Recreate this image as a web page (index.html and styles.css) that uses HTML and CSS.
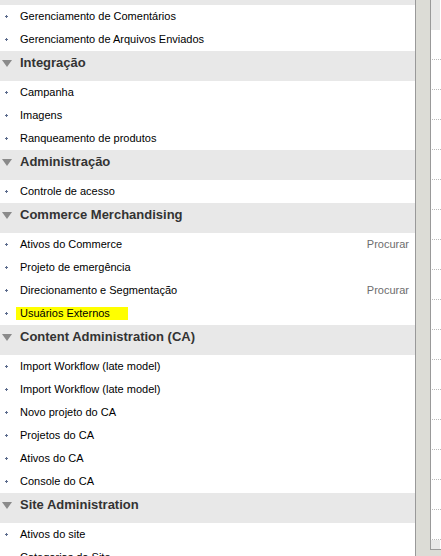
FILE: index.html
```html
<!DOCTYPE html>
<html lang="pt">
<head>
  <meta charset="UTF-8" />
  <title>Menu</title>
  <link rel="stylesheet" href="styles.css">
</head>
<body>
  <div class="menu">
    <div class="group-end"></div>
    <ul class="items">
      <li><span class="bullet"><svg width="3" height="3" viewBox="0 0 3 3"><path d="M1 0h1v3H1zM0 1h3v1H0z" /></svg></span>Gerenciamento de Comentários</li>
      <li><span class="bullet"><svg width="3" height="3" viewBox="0 0 3 3"><path d="M1 0h1v3H1zM0 1h3v1H0z" /></svg></span>Gerenciamento de Arquivos Enviados</li>
    </ul>

    <div class="group-head"><span class="arrow"></span>Integração</div>
    <ul class="items">
      <li><span class="bullet"><svg width="3" height="3" viewBox="0 0 3 3"><path d="M1 0h1v3H1zM0 1h3v1H0z" /></svg></span>Campanha</li>
      <li><span class="bullet"><svg width="3" height="3" viewBox="0 0 3 3"><path d="M1 0h1v3H1zM0 1h3v1H0z" /></svg></span>Imagens</li>
      <li><span class="bullet"><svg width="3" height="3" viewBox="0 0 3 3"><path d="M1 0h1v3H1zM0 1h3v1H0z" /></svg></span>Ranqueamento de produtos</li>
    </ul>

    <div class="group-head"><span class="arrow"></span>Administração</div>
    <ul class="items">
      <li><span class="bullet"><svg width="3" height="3" viewBox="0 0 3 3"><path d="M1 0h1v3H1zM0 1h3v1H0z" /></svg></span>Controle de acesso</li>
    </ul>

    <div class="group-head"><span class="arrow"></span>Commerce Merchandising</div>
    <ul class="items">
      <li><span class="bullet"><svg width="3" height="3" viewBox="0 0 3 3"><path d="M1 0h1v3H1zM0 1h3v1H0z" /></svg></span>Ativos do Commerce<span class="search">Procurar</span></li>
      <li><span class="bullet"><svg width="3" height="3" viewBox="0 0 3 3"><path d="M1 0h1v3H1zM0 1h3v1H0z" /></svg></span>Projeto de emergência</li>
      <li><span class="bullet"><svg width="3" height="3" viewBox="0 0 3 3"><path d="M1 0h1v3H1zM0 1h3v1H0z" /></svg></span>Direcionamento e Segmentação<span class="search">Procurar</span></li>
      <li><span class="bullet"><svg width="3" height="3" viewBox="0 0 3 3"><path d="M1 0h1v3H1zM0 1h3v1H0z" /></svg></span><span class="hilite">Usuários Externos</span></li>
    </ul>

    <div class="group-head"><span class="arrow"></span>Content Administration (CA)</div>
    <ul class="items">
      <li><span class="bullet"><svg width="3" height="3" viewBox="0 0 3 3"><path d="M1 0h1v3H1zM0 1h3v1H0z" /></svg></span>Import Workflow (late model)</li>
      <li><span class="bullet"><svg width="3" height="3" viewBox="0 0 3 3"><path d="M1 0h1v3H1zM0 1h3v1H0z" /></svg></span>Import Workflow (late model)</li>
      <li><span class="bullet"><svg width="3" height="3" viewBox="0 0 3 3"><path d="M1 0h1v3H1zM0 1h3v1H0z" /></svg></span>Novo projeto do CA</li>
      <li><span class="bullet"><svg width="3" height="3" viewBox="0 0 3 3"><path d="M1 0h1v3H1zM0 1h3v1H0z" /></svg></span>Projetos do CA</li>
      <li><span class="bullet"><svg width="3" height="3" viewBox="0 0 3 3"><path d="M1 0h1v3H1zM0 1h3v1H0z" /></svg></span>Ativos do CA</li>
      <li><span class="bullet"><svg width="3" height="3" viewBox="0 0 3 3"><path d="M1 0h1v3H1zM0 1h3v1H0z" /></svg></span>Console do CA</li>
    </ul>

    <div class="group-head"><span class="arrow"></span>Site Administration</div>
    <ul class="items">
      <li><span class="bullet"><svg width="3" height="3" viewBox="0 0 3 3"><path d="M1 0h1v3H1zM0 1h3v1H0z" /></svg></span>Ativos do site</li>
      <li><span class="bullet"><svg width="3" height="3" viewBox="0 0 3 3"><path d="M1 0h1v3H1zM0 1h3v1H0z" /></svg></span>Categorias do Site</li>
    </ul>
  </div>

  <div class="frame">
    <div class="side">
      <div class="side-block"></div>
      <div class="side-row"></div>
      <div class="side-row"></div>
      <div class="side-row"></div>
      <div class="side-row"></div>
      <div class="side-row"></div>
      <div class="side-row"></div>
      <div class="side-row"></div>
      <div class="side-row"></div>
      <div class="side-row"></div>
      <div class="side-row"></div>
      <div class="side-row"></div>
      <div class="side-row"></div>
      <div class="side-row"></div>
      <div class="side-row"></div>
      <div class="side-row"></div>
      <div class="side-row"></div>
      <div class="side-row"></div>
      <div class="side-block small"></div>
    </div>
  </div>
</body>
</html>
```

FILE: styles.css
```css
* {
  box-sizing: border-box;
}

body {
  margin: 0;
  height: 556px;
  overflow: hidden;
  display: flex;
  font-family: "Liberation Sans", Arial, sans-serif;
  background: #fff;
}

.menu {
  width: 415px;
  flex: none;
  height: 556px;
  overflow: hidden;
}

.group-end {
  height: 5px;
  background: #e8e8e8;
}

.items {
  list-style: none;
  margin: 0;
  padding: 0;
}

.items li {
  display: flex;
  align-items: center;
  height: 23px;
  line-height: 23px;
  font-size: 11px;
  color: #000;
  padding-right: 6px;
}

.bullet {
  width: 20px;
  flex: none;
  display: flex;
  align-items: center;
  padding-left: 5px;
}

.bullet svg {
  fill: #5b6b8c;
}

.search {
  margin-left: auto;
  color: #6d6d6d;
}

.hilite {
  background: #ffff00;
  margin-left: -4px;
  padding: 0 18px 0 4px;
  line-height: 13px;
}

.group-head {
  height: 30px;
  padding-top: 3px;
  line-height: 18px;
  background: #e8e8e8;
  color: #333;
  font-size: 13px;
  font-weight: bold;
  display: flex;
  align-items: center;
  align-self: flex-start;
}

.group-head {
  align-items: flex-start;
}

.arrow {
  width: 20px;
  height: 18px;
  flex: none;
  display: flex;
  align-items: center;
  padding-left: 2px;
}

.arrow::before {
  content: "";
  border-left: 5px solid transparent;
  border-right: 5px solid transparent;
  border-top: 7px solid #8a8a8a;
}

.frame {
  flex: 1;
  background: #dcdcd6;
  border-left: 1px solid #999;
  padding-left: 14px;
}

.side {
  height: 550px;
  background: #fff;
  border-left: 1px solid #999;
  border-bottom: 1px solid #999;
}

.side-block {
  height: 30px;
  background: #e8e8e8;
  margin-right: 1px;
}

.side-block.small {
  height: 9px;
}

.side-row {
  height: 30px;
  border-bottom: 1px dotted #bbb;
  margin-left: 1px;
}
```
